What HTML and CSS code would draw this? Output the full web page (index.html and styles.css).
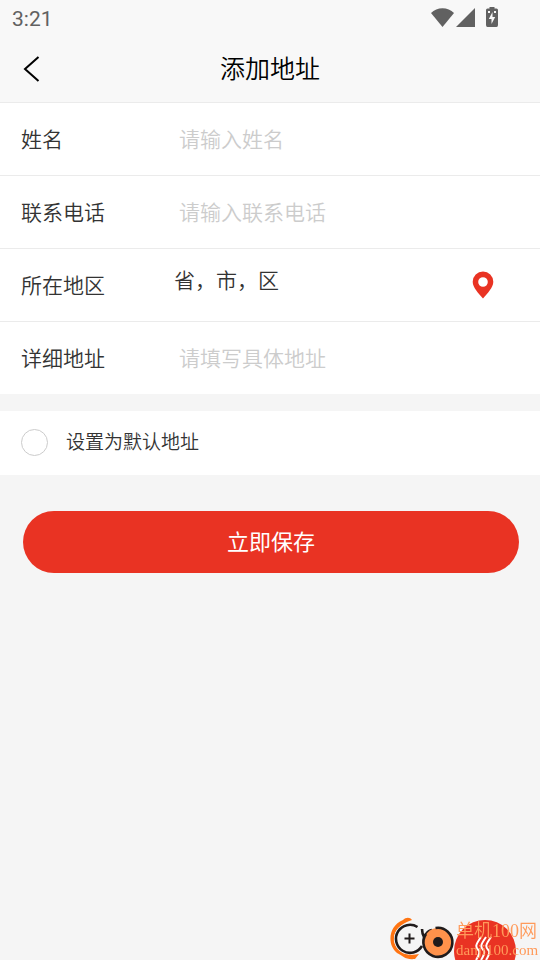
FILE: index.html
```html
<!DOCTYPE html>
<html lang="zh-CN">
<head>
<meta charset="utf-8">
<meta name="viewport" content="width=device-width, initial-scale=1">
<title>添加地址</title>
<link rel="stylesheet" href="styles.css">
</head>
<body>
<header class="top">
  <div class="status">
    <span class="clock">3:21</span>
    <svg class="status-icons" width="70" height="28" viewBox="0 0 70 28" fill="#616161" aria-hidden="true">
      <path d="M1 13C7 6.500 18 6.500 24 13L12.500 27Z"/>
      <path d="M26 27L45 8V27Z"/>
      <path fill-rule="evenodd" d="M59.500 7H64.500V8.500H66.500Q68 8.500 68 10V25Q68 27 66.500 27H57.500Q56 27 56 25V10Q56 8.500 57.500 8.500H59.500ZM62.500 12L58.800 19H61.500V24L65.200 17H62.500ZM58 11V13H60V11ZM64 11V13H66V11Z"/>
    </svg>
  </div>
  <nav class="navbar">
    <button class="back" type="button" aria-label="返回">
      <svg width="18" height="28" viewBox="0 0 18 28" fill="none" stroke="#000" stroke-width="2"><path d="M15.500 2L2 14L15.500 26"/></svg>
    </button>
    <h1 class="title">添加地址</h1>
  </nav>
</header>
<main>
  <form class="form">
    <div class="fields">
      <div class="row">
        <label class="label" for="name">姓名</label>
        <input class="input" id="name" type="text" placeholder="请输入姓名">
      </div>
      <div class="row">
        <label class="label" for="phone">联系电话</label>
        <input class="input" id="phone" type="tel" placeholder="请输入联系电话">
      </div>
      <div class="row">
        <label class="label" for="region">所在地区</label>
        <button class="region" id="region" type="button">
          <span class="region-text">省，市，区</span>
          <svg width="22" height="28" viewBox="0 0 22 28" aria-hidden="true"><path fill="#e93323" fill-rule="evenodd" d="M11 .5A10.300 10.300 0 0 0 .7 10.800C.7 16.500 6.500 22.500 11 27.500C15.500 22.500 21.300 16.500 21.300 10.800A10.300 10.300 0 0 0 11 .5ZM11 6.200A4.800 4.800 0 1 1 11 15.800A4.800 4.800 0 1 1 11 6.200Z"/></svg>
        </button>
      </div>
      <div class="row">
        <label class="label" for="detail">详细地址</label>
        <input class="input" id="detail" type="text" placeholder="请填写具体地址">
      </div>
    </div>
    <label class="default">
      <input class="check" type="checkbox">
      <span class="default-text">设置为默认地址</span>
    </label>
    <button class="save" type="submit">立即保存</button>
  </form>
</main>
<aside class="badge">
  <svg class="badge-art" width="150" height="44" viewBox="0 0 150 44" aria-hidden="true">
    <circle cx="95" cy="35" r="31" fill="#e93323"/>
    <path d="M91 21C84 31 86 31 89 35Q90 38 86 44M96 21C89 31 91 31 94 35Q95 38 91 44M101 21C94 31 96 31 99 35Q100 38 96 44" fill="none" stroke="#fff" stroke-width="2"/>
    <path d="M22 4C20 1 16 1 13 4C-2 10-3 29 7 37C13 40 15 44 25 43L29 38C17 41 6 35 4 25C3 15 10 8 22 4Z" fill="#ff7412"/>
    <circle cx="19.500" cy="23" r="15.500" fill="#f5f5f5"/>
    <path d="M27.500 11A14 14 0 1 0 32 30M32 13Q32 18 34.500 22M42 14Q37 15 35 20" fill="none" stroke="#201b1b" stroke-width="2.600"/>
    <circle cx="48" cy="26" r="14" fill="#ff924b"/>
    <path d="M45.500 12A14.500 14.500 0 1 1 36 18" fill="none" stroke="#201b1b" stroke-width="2.600"/>
    <circle cx="48" cy="26" r="5" fill="#201b1b"/>
    <path d="M14.500 22.500H24.500M19.500 17.500V27.500" stroke="#201b1b" stroke-width="2"/>
  </svg>
  <div class="badge-text">
    <span class="badge-name">单机100网</span>
    <span class="badge-site">danji100.com</span>
  </div>
</aside>
</body>
</html>
```
FILE: styles.css
```css
* { box-sizing: border-box; }

body {
  margin: 0;
  min-height: 100vh;
  background: #f5f5f5;
  color: #333;
  font-family: "Noto Sans CJK SC", sans-serif;
  font-size: 21px;
  font-weight: 350;
}

button, input {
  font: inherit;
  color: inherit;
}

button {
  border: 0;
  background: none;
  cursor: pointer;
}

.top {
  background: #f8f8f8;
  border-bottom: 1px solid #ebebeb;
}

.status {
  display: flex;
  justify-content: space-between;
  height: 36px;
  padding: 0 40px 0 12px;
}

.clock {
  color: #616161;
  font-family: Roboto, sans-serif;
  font-weight: 450;
  font-size: 21px;
  line-height: 38px;
}

.navbar {
  display: grid;
  grid-template-columns: 64px 1fr 64px;
  align-items: center;
  height: 66px;
}

.back {
  display: flex;
  padding: 0 0 0 23px;
}

.title {
  margin: 0;
  color: #000;
  font-size: 25px;
  font-weight: 350;
  line-height: 36px;
  padding-bottom: 5px;
  text-align: center;
}

.form {
  display: flex;
  flex-direction: column;
}

.fields { background: #fff; }

.row {
  display: flex;
  align-items: center;
  height: 73px;
  padding: 0 21px;
}

.row:first-child { height: 72px; }

.row + .row { border-top: 1px solid #ebebeb; }

.label {
  flex: 0 0 153px;
  line-height: 32px;
  padding-bottom: 2px;
}

.input {
  flex: 1;
  min-width: 0;
  height: 40px;
  padding: 0 5px 3px;
  border: 0;
  outline: 0;
  background: transparent;
}

.input::placeholder {
  color: #ccc;
  opacity: 1;
}

.region {
  flex: 1;
  display: flex;
  justify-content: space-between;
  align-items: center;
  padding: 0 25px 0 0;
  text-align: left;
}

.region-text {
  line-height: 32px;
  padding-bottom: 12px;
}

.default {
  display: flex;
  align-items: center;
  gap: 18px;
  height: 64px;
  margin-top: 17px;
  padding: 0 21px 2px;
  background: #fff;
  font-size: 19px;
}

.check {
  appearance: none;
  width: 27px;
  height: 27px;
  margin: 0;
  border: 1px solid #ccc;
  border-radius: 50%;
}

.check:checked {
  border-color: #e93323;
  background: #e93323;
}

.default-text { padding-bottom: 4px; }

.save {
  height: 62px;
  margin: 36px 21px 0 23px;
  padding: 0 0 4px;
  border-radius: 31px;
  background: #e93323;
  color: #fff;
  font-size: 22px;
  font-weight: 400;
}

.badge {
  position: fixed;
  right: 0;
  bottom: 0;
  width: 150px;
  height: 44px;
  overflow: hidden;
  font-family: "Liberation Serif", "Noto Sans CJK SC", serif;
}

.badge-art { display: block; }

.badge-text {
  position: absolute;
  top: 5px;
  left: 66px;
  display: flex;
  flex-direction: column;
  color: #ff9a5a;
  white-space: nowrap;
}

.badge-name {
  font-size: 18px;
  line-height: 20px;
}

.badge-site {
  font-size: 15px;
  line-height: 18px;
}
```
